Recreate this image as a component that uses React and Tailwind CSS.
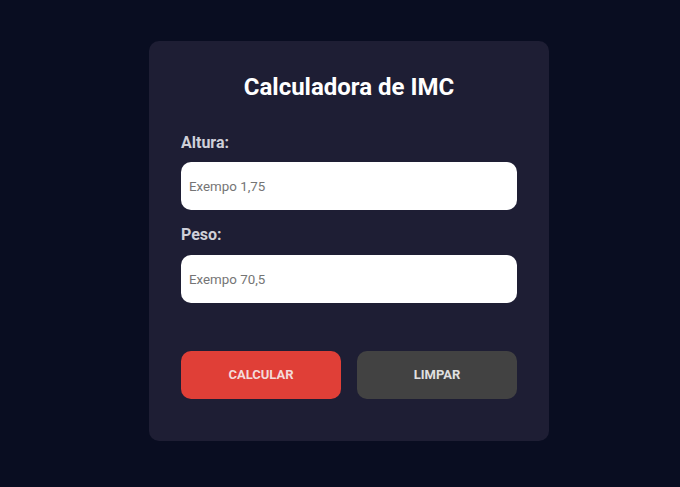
export default function App() {
  return (
    <div
      className="min-h-[487px] w-full bg-[#090d21] pl-[149px] pt-[41px]"
      style={{ fontFamily: "Roboto, 'Liberation Sans', sans-serif" }}
    >
      <div className="flex h-[400px] w-[400px] flex-col rounded-[10px] bg-[#1e1e34] px-8 pt-8">
        <h2 className="text-center text-[24px] font-bold leading-[29px] text-white">
          Calculadora de IMC
        </h2>
        <label className="mt-[31px] mb-[9px] block text-[16px] font-bold leading-[20px] text-[#cfd0d8]">
          Altura:
        </label>
        <input
          type="text"
          placeholder="Exempo 1,75"
          className="h-12 w-full rounded-[10px] bg-white px-2 text-[13.333px] text-[#333] placeholder:text-[#757575] outline-none"
        />
        <label className="mt-[15px] mb-[10px] block text-[16px] font-bold leading-[20px] text-[#cfd0d8]">
          Peso:
        </label>
        <input
          type="text"
          placeholder="Exempo 70,5"
          className="h-12 w-full rounded-[10px] bg-white px-2 text-[13.333px] text-[#333] placeholder:text-[#757575] outline-none"
        />
        <div className="mt-12 flex gap-4">
          <button className="h-12 w-40 rounded-[10px] bg-[#e03f37] text-[13px] font-bold text-[#f3dada]">
            CALCULAR
          </button>
          <button className="h-12 w-40 rounded-[10px] bg-[#424242] text-[13px] font-bold text-[#e0e0e0]">
            LIMPAR
          </button>
        </div>
      </div>
    </div>
  );
}
